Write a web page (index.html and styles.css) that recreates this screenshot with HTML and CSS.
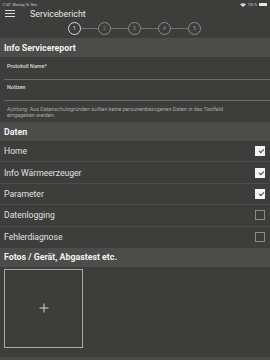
FILE: index.html
```html
<!DOCTYPE html>
<html lang="de">
<head>
  <meta charset="UTF-8">
  <meta name="viewport" content="width=device-width, initial-scale=1.0">
  <title>Servicebericht</title>
  <link rel="stylesheet" href="styles.css">
</head>
<body>
  <div class="statusbar">
    <span class="time">17:47&nbsp; Montag 16. Nov</span>
    <span class="status-right">
      <svg class="wifi" width="6" height="4" viewBox="0 0 6 4"><path d="M0 1.4 A4.2 4.2 0 0 1 6 1.4 L3 4 Z" fill="#d8d8d8"/></svg>
      <span>100 %</span>
      <span class="battery"></span>
    </span>
  </div>

  <div class="topbar">
    <div class="burger"><span></span><span></span><span></span></div>
    <h1>Servicebericht</h1>
  </div>

  <div class="stepper">
    <div class="step active">1</div>
    <div class="step-line"></div>
    <div class="step">2</div>
    <div class="step-line"></div>
    <div class="step">3</div>
    <div class="step-line"></div>
    <div class="step">4</div>
    <div class="step-line"></div>
    <div class="step">5</div>
  </div>

  <h2 class="section-head">Info Servicereport</h2>
  <div class="field first">
    <label>Protokoll Name*</label>
  </div>
  <div class="field">
    <label>Notizen</label>
  </div>
  <p class="note">Achtung: Aus Datenschutzgründen sollten keine personenbezogenen Daten in das Textfeld eingegeben werden.</p>

  <h2 class="section-head">Daten</h2>
  <ul class="rows">
    <li>Home <span class="box checked"></span></li>
    <li>Info Wärmeerzeuger <span class="box checked"></span></li>
    <li>Parameter <span class="box checked"></span></li>
    <li>Datenlogging <span class="box"></span></li>
    <li>Fehlerdiagnose <span class="box"></span></li>
  </ul>

  <h2 class="section-head">Fotos / Gerät, Abgastest etc.</h2>
  <div class="photos">
    <div class="photo-add"></div>
  </div>
  <div class="bottom"></div>
</body>
</html>
```

FILE: styles.css
```css
body {
  margin: 0;
  background-color: #3d3d3b;
  color: #e2e2e2;
  font-family: Roboto, "Liberation Sans", sans-serif;
  height: 360px;
  overflow: hidden;
  display: flex;
  flex-direction: column;
}

.statusbar {
  height: 9px;
  display: flex;
  justify-content: space-between;
  align-items: center;
  padding: 0 3px 0 2px;
  font-size: 3.5px;
  color: #cfcfcf;
}

.status-right {
  display: flex;
  align-items: center;
  gap: 2px;
}

.battery {
  width: 8px;
  height: 3px;
  background: #e6e6e6;
  border-radius: 0.5px;
}

.topbar {
  height: 9px;
  display: flex;
  align-items: center;
}

.burger {
  width: 10px;
  margin: 0 15px 0 5px;
  display: flex;
  flex-direction: column;
  gap: 2px;
}

.burger span {
  height: 1px;
  background: #dcdcdc;
}

.topbar h1 {
  margin: 0;
  font-size: 8.8px;
  font-weight: 400;
  color: #e6e6e6;
}

.stepper {
  height: 20px;
  display: flex;
  align-items: center;
  justify-content: center;
  margin-left: -1px;
}

.step {
  width: 11px;
  height: 11px;
  border: 1px solid #8a8a88;
  border-radius: 50%;
  display: flex;
  align-items: center;
  justify-content: center;
  font-size: 5px;
  color: #8e8e8c;
}

.step.active {
  border-color: #d8d8d8;
  color: #e6e6e6;
}

.step-line {
  width: 17px;
  height: 1px;
  background: #6e6e6c;
}

.section-head {
  margin: 0;
  height: 19px;
  background: #4c4c4a;
  display: flex;
  align-items: center;
  padding: 0 4px;
  font-size: 8.8px;
  font-weight: 700;
  color: #f2f2f2;
}

.field {
  height: 21px;
  margin-left: 4px;
  border-bottom: 1px solid #6a6a68;
  padding: 4px 0 0 3px;
  box-sizing: border-box;
  font-size: 5.4px;
  line-height: 7px;
}

.field.first {
  height: 23px;
  padding-top: 6px;
}

.field label {
  display: block;
  font-weight: 500;
  color: #dcdcdc;
}

.note {
  margin: 0;
  height: 21px;
  padding: 6px 26px 0 7px;
  box-sizing: border-box;
  font-size: 5.4px;
  line-height: 5.8px;
  color: #a8a8a6;
}

.rows {
  list-style: none;
  margin: 0;
  padding: 0;
}

.rows li {
  height: 21.4px;
  box-sizing: border-box;
  border-bottom: 1px solid #4c4c4a;
  display: flex;
  align-items: center;
  justify-content: space-between;
  padding: 0 5px 0 4px;
  font-size: 8.6px;
  color: #e0e0e0;
}

.rows li:last-child {
  border-bottom: none;
}

.box {
  width: 10px;
  height: 10px;
  box-sizing: border-box;
  border: 1px solid #8a8a88;
  position: relative;
}

.box.checked {
  background: #f4f4f4;
  border-color: #f4f4f4;
}

.box.checked::after {
  content: "";
  position: absolute;
  left: 2.5px;
  top: 2px;
  width: 4px;
  height: 2px;
  border-left: 1px solid #444;
  border-bottom: 1px solid #444;
  transform: rotate(-45deg);
}

.photos {
  flex: 1;
  padding: 2px 4px;
}

.photo-add {
  width: 79px;
  height: 79px;
  box-sizing: border-box;
  border: 1px solid #a9a9a7;
  position: relative;
}

.photo-add::before,
.photo-add::after {
  content: "";
  position: absolute;
  background: #d6d6d4;
  left: 50%;
  top: 50%;
  transform: translate(-50%, -50%);
}

.photo-add::before {
  width: 9px;
  height: 1px;
}

.photo-add::after {
  width: 1px;
  height: 9px;
}

.bottom {
  height: 3px;
  background: #4a4a48;
}
```
